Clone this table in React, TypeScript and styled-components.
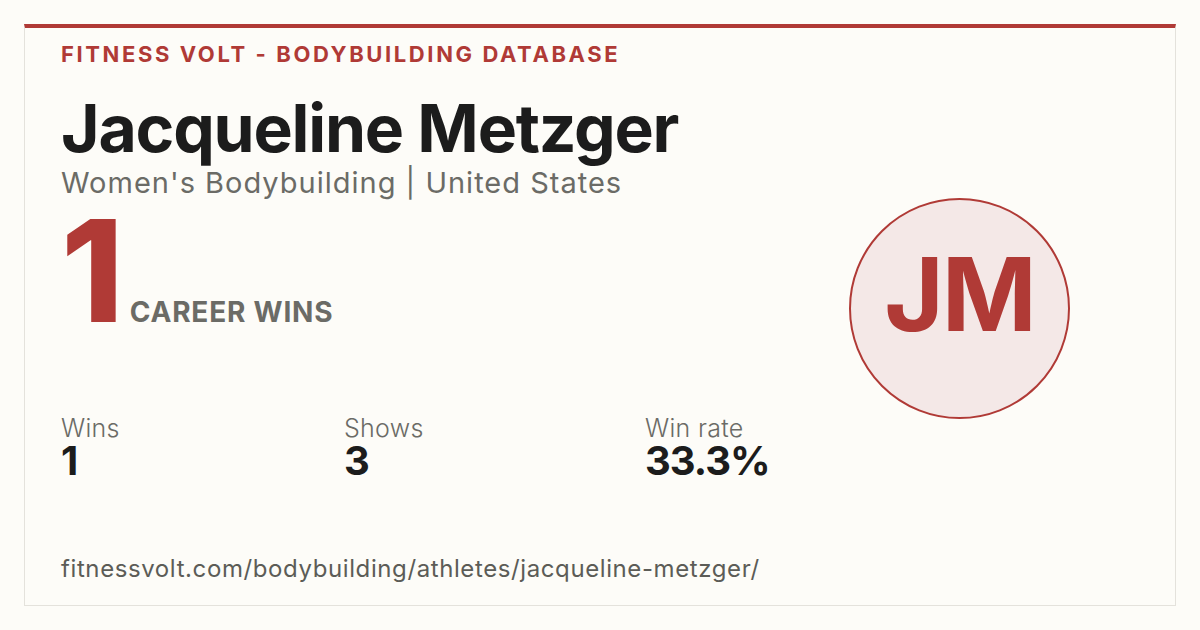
import * as React from 'react';
import styled, { createGlobalStyle } from 'styled-components';

const GlobalStyle = createGlobalStyle`
  html, body {
    margin: 0;
    padding: 0;
    background: #fdfcf8;
  }
  body {
    font-family: Inter, "Noto Sans", "Liberation Sans", sans-serif;
  }
`;

const stats = [
  { label: 'Wins', value: '1' },
  { label: 'Shows', value: '3' },
  { label: 'Win rate', value: '33.3%' },
];

export default () => {
  return (
    <>
      <GlobalStyle />
      <Page>
        <Card>
          <Main>
            <Brand>Fitness Volt - Bodybuilding Database</Brand>
            <Name>Jacqueline Metzger</Name>
            <Meta>Women's Bodybuilding | United States</Meta>
            <Hero>
              <BigNumber>1</BigNumber>
              <HeroLabel>Career Wins</HeroLabel>
            </Hero>
            <Stats>
              {stats.map((s) => (
                <Stat key={s.label}>
                  <StatLabel>{s.label}</StatLabel>
                  <StatValue>{s.value}</StatValue>
                </Stat>
              ))}
            </Stats>
            <Url>fitnessvolt.com/bodybuilding/athletes/jacqueline-metzger/</Url>
          </Main>
          <Avatar>JM</Avatar>
        </Card>
      </Page>
    </>
  );
};

const Page = styled.div`
  width: 1200px;
  height: 630px;
  padding: 24px;
  box-sizing: border-box;
`;
const Card = styled.div`
  display: flex;
  align-items: center;
  height: 582px;
  box-sizing: border-box;
  border: 1px solid #e4e2dc;
  border-top: 4px solid #b03a36;
  padding: 13px 36px 22px 36px;
`;
const Main = styled.div`
  flex: 1;
  height: 100%;
  display: flex;
  flex-direction: column;
`;
const Brand = styled.div`
  font-size: 22px;
  line-height: 26px;
  font-weight: 700;
  letter-spacing: 2.6px;
  text-transform: uppercase;
  color: #b03a36;
`;
const Name = styled.h1`
  margin: 25px 0 0;
  font-size: 66px;
  line-height: 72px;
  font-weight: 700;
  letter-spacing: -1.2px;
  color: #1c1c1c;
`;
const Meta = styled.div`
  margin-top: 2px;
  font-size: 29px;
  line-height: 34px;
  font-weight: 400;
  letter-spacing: 1px;
  color: #6b6b66;
`;
const Hero = styled.div`
  display: flex;
  align-items: baseline;
  gap: 10px;
  margin-top: -2px;
`;
const BigNumber = styled.span`
  font-size: 142px;
  line-height: 144px;
  font-weight: 800;
  letter-spacing: -4px;
  color: #b03a36;
`;
const HeroLabel = styled.span`
  font-size: 28px;
  font-weight: 700;
  letter-spacing: 0.8px;
  text-transform: uppercase;
  color: #6b6b66;
`;
const Stats = styled.div`
  display: grid;
  grid-template-columns: 283px 301px auto;
  margin-top: 73px;
`;
const Stat = styled.div`
  display: flex;
  flex-direction: column;
`;
const StatLabel = styled.span`
  font-size: 25px;
  line-height: 26px;
  font-weight: 300;
  letter-spacing: 0.3px;
  color: #6b6b66;
`;
const StatValue = styled.span`
  font-size: 40px;
  line-height: 40px;
  font-weight: 700;
  letter-spacing: -1px;
  color: #1c1c1c;
`;
const Url = styled.div`
  margin-top: auto;
  font-size: 24px;
  line-height: 28px;
  letter-spacing: 0.6px;
  color: #5c5c57;
`;
const Avatar = styled.div`
  flex: none;
  width: 221px;
  height: 221px;
  box-sizing: border-box;
  border-radius: 50%;
  border: 2px solid #b03a36;
  background: #f4e8e7;
  display: flex;
  align-items: center;
  justify-content: center;
  padding-bottom: 28px;
  margin: 0 69px 8px 0;
  font-size: 102px;
  font-weight: 700;
  letter-spacing: -2px;
  color: #b03a36;
`;
